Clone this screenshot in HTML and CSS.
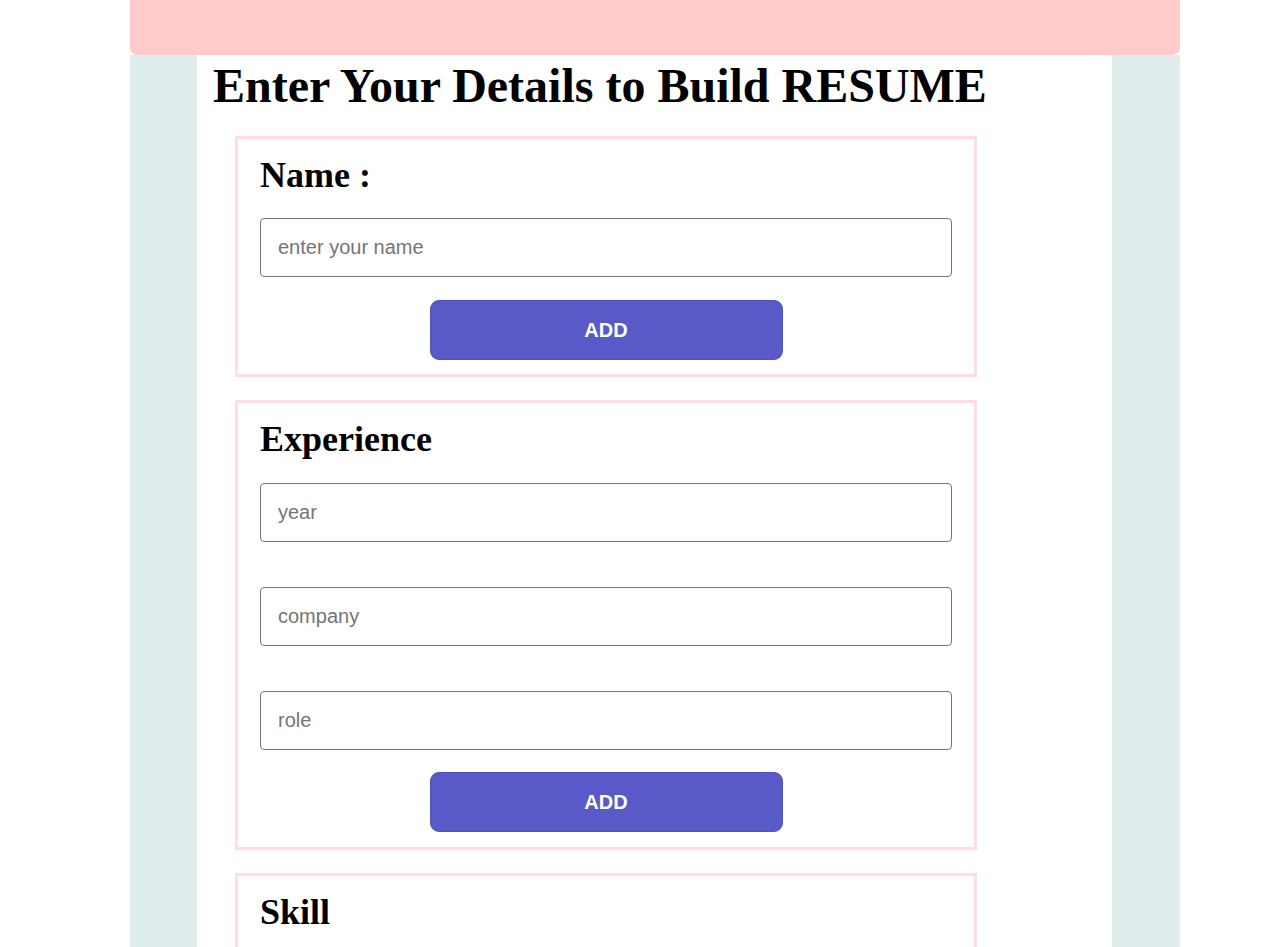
FILE: index.html
```html
<!DOCTYPE html>
<html>
<head>
<meta charset="utf-8">
<title>Resume Builder</title>
<link rel="stylesheet" href="styles.css">
</head>
<body>
<div class="page">
  <header class="topbar"></header>
  <div class="frame">
    <main class="content">
      <h1 class="title">Enter Your Details to Build RESUME</h1>
      <section class="card card-name">
        <h2 class="card-title">Name :</h2>
        <input class="field" type="text" placeholder="enter your name">
        <button class="add-btn">ADD</button>
      </section>
      <section class="card">
        <h2 class="card-title">Experience</h2>
        <div class="fields">
          <input class="field" type="text" placeholder="year">
          <input class="field" type="text" placeholder="company">
          <input class="field" type="text" placeholder="role">
        </div>
        <button class="add-btn">ADD</button>
      </section>
      <section class="card">
        <h2 class="card-title">Skill</h2>
        <input class="field" type="text" placeholder="skill">
        <button class="add-btn">ADD</button>
      </section>
    </main>
  </div>
</div>
</body>
</html>
```
FILE: styles.css
```css
html, body {
  margin: 0;
  padding: 0;
  background: #ffffff;
}
body {
  font-family: "Liberation Serif", "Times New Roman", serif;
}
.page {
  width: 1050px;
  margin-left: 130px;
}
.topbar {
  height: 55px;
  background: #ffcccb;
  border-radius: 0 0 7px 7px;
}
.frame {
  background: #dfeded;
  padding: 0 68px 0 67px;
}
.content {
  background: #ffffff;
  padding: 3px 0 40px 16px;
  min-height: 1000px;
}
.title {
  margin: 0;
  font-size: 48px;
  font-weight: bold;
  line-height: 55px;
  color: #000;
}
.card {
  width: 692px;
  margin: 0 0 23px 22px;
  border: 3px solid #ffdde2;
  padding: 16px 22px 15px 22px;
  display: flex;
  flex-direction: column;
  align-items: stretch;
}
.card-name {
  margin-top: 23px;
  padding-bottom: 14px;
}
.card-title {
  margin: 0 0 23px 0;
  font-size: 36px;
  line-height: 40px;
  font-weight: bold;
  color: #000;
}
.fields {
  display: flex;
  flex-direction: column;
  gap: 45px;
  margin-top: 1px;
}
.field {
  box-sizing: border-box;
  height: 59px;
  width: 100%;
  margin: 0;
  border: 1px solid #767676;
  border-radius: 4px;
  padding: 0 17px;
  font-family: "Liberation Sans", Arial, sans-serif;
  font-size: 20px;
  color: #000;
  background: #fff;
}
.field::placeholder {
  color: #757575;
}
.add-btn {
  align-self: center;
  margin-top: 23px;
  width: 353px;
  height: 60px;
  border: 1px solid #5050c0;
  border-radius: 9px;
  background: #5959c8;
  color: #ffffff;
  font-family: "Liberation Sans", Arial, sans-serif;
  font-weight: bold;
  font-size: 20px;
}
.fields + .add-btn {
  margin-top: 22px;
}
```
